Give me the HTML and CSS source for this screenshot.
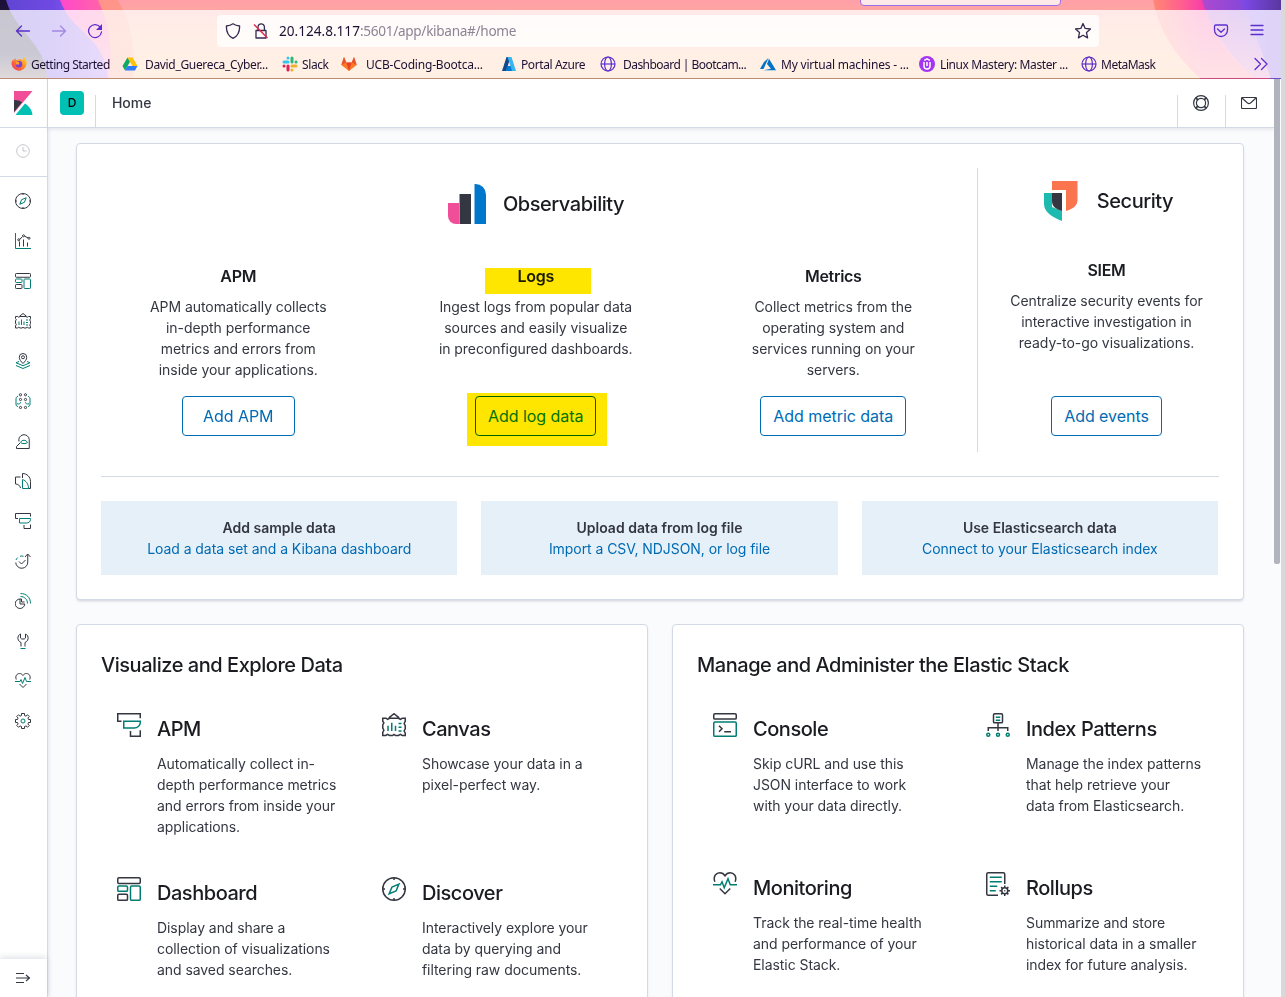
FILE: index.html
```html
<!DOCTYPE html>
<html lang="en">
<head>
<meta charset="utf-8">
<title>Home - Kibana</title>
<link rel="stylesheet" href="styles.css">
</head>
<body>
<svg class="defs" aria-hidden="true">
  <symbol id="discover" viewBox="0 0 32 32"><circle class="k" cx="16" cy="16" r="15"/><path class="k" d="M16 1v3M16 28v3M1 16h3M28 16h3"/><path class="t" d="M22.500 9.500l-3.800 9.200-9.200 3.800 3.800-9.200z"/></symbol>
  <symbol id="visualize" viewBox="0 0 32 32"><path class="t" d="M1 0v31h31"/><path class="k" d="M9 17v10M17 13v14M25 19v8M9 12.500l6-5M19 6.500l7 3"/><circle class="k" cx="7.500" cy="13.500" r="2"/><circle class="k" cx="17" cy="5.500" r="2"/><circle class="k" cx="28" cy="10.500" r="2"/></symbol>
  <symbol id="dashboard" viewBox="0 0 32 32"><rect class="k" x="1" y="1" width="30" height="7.500" rx="1.500"/><rect class="t" x="1" y="12" width="13" height="7" rx="1.500"/><rect class="k" x="1" y="23" width="13" height="8" rx="1.500"/><rect class="t" x="18" y="12" width="13" height="19" rx="1.500"/></symbol>
  <symbol id="canvas" viewBox="0 0 32 32"><path class="k" d="M9 6.500L16 1l7 5.500M1 7h4.500l2 1.500 2.500-1.500h12l2.500 1.500L27 7h4v4l-1.500 3 1.500 3v4l-1.500 3 1.500 3v3h-4l-2.500-1.500L22 30h-4l-2-1.500L14 30h-4l-2.500-1.500L5 30H1v-4l1.500-3L1 20v-4l1.500-3L1 11z"/><path class="t" d="M8 17v7M13 13v11M18 17v7M22 14h4M22 19h4M22 24h4"/></symbol>
  <symbol id="maps" viewBox="0 0 32 32"><path class="k" d="M16 21c-4-4-7.500-8-7.500-12.500a7.500 7.500 0 0115 0C23.500 13 20 17 16 21z"/><circle class="k" cx="16" cy="8.500" r="3"/><path class="t" d="M8 17l-6 2.500 14 6 14-6-6-2.500M2 25l14 6 14-6"/></symbol>
  <symbol id="ml" viewBox="0 0 32 32"><circle class="k" cx="11" cy="3.500" r="2.200"/><circle class="k" cx="21" cy="3.500" r="2.200"/><circle class="k" cx="11" cy="13" r="2.200"/><circle class="k" cx="21" cy="13" r="2.200"/><circle class="k" cx="11" cy="29" r="2.200"/><circle class="k" cx="21" cy="29" r="2.200"/><path class="t" d="M6 6.500c-3 1-4 3-4 5.500v10c0 3 1 4.500 4 5M26 6.500c3 1 4 3 4 5.500v10c0 3-1 4.500-4 5M4 21.500c4 1 7 0 7-3M28 21.500c-4 1-7 0-7-3"/></symbol>
  <symbol id="metrics" viewBox="0 0 32 32"><path class="k" d="M8 17a10.500 10.500 0 1120.500-4V31H3v-4l7-7"/><path class="t" d="M11 19c3-6 11-6 14 0-3 3-11 3-14 0z"/></symbol>
  <symbol id="logs" viewBox="0 0 32 32"><path class="k" d="M11 8H1v14c5 0 9 3 10 8M15 1c9 0 16 7 16 16v14h-4M15 1v9"/><path class="t" d="M15 13v18h12c0-9-5-16-12-18z"/></symbol>
  <symbol id="apm" viewBox="0 0 32 32"><path class="k" d="M6 11H1V1h30v6M18 24v7h13v-8"/><path class="t" d="M9 11h22v2c0 4-4 7-8 7H9z"/></symbol>
  <symbol id="uptime" viewBox="0 0 32 32"><path class="k" d="M1.500 19a12 12 0 0024-1V2M20 8l5.500-6L31 8M8 17l5 5 8-8"/><path class="t" d="M2 14c.8-2 1.800-3.500 3.500-5M10 6.500a12 12 0 017 0"/></symbol>
  <symbol id="siem" viewBox="0 0 32 32"><path class="k" d="M10 12a9.500 9.500 0 109.500 10H10zM10 12h3v6h6"/><path class="t" d="M11 1c12 0 20 8 20 20M11 7c8 0 14 6 14 14"/></symbol>
  <symbol id="devtools" viewBox="0 0 32 32"><path class="k" d="M12 27V19C7 17 5 12 6 8c.7-3 2.500-5 5-6v8l2.500 2h5L21 10V2c2.500 1 4.500 3 5 6 1 4-1 9-6 11v8"/><path class="t" d="M11 31h10"/></symbol>
  <symbol id="monitoring" viewBox="0 0 32 32"><path class="k" d="M2.500 13C-.5 5 5 1 9 1c3 0 5.500 1.500 7 4 1.500-2.500 4-4 7-4 4 0 9.500 4 6.500 12M9 22l7 7 7-7"/><path class="t" d="M0 17h10l2-4 3 8 5-12 3 8h9"/></symbol>
  <symbol id="gear" viewBox="0 0 32 32"><path class="k" d="M13 1h6v4l3 1.300L25 3.500 28.500 7l-2.700 3L27 13h4v6h-4l-1.200 3 2.700 3-3.500 3.500-3-2.700L19 27v4h-6v-4l-3-1.200-3 2.700L3.500 25l2.700-3L5 19H1v-6h4l1.200-3-2.700-3L7 3.500l3 2.800L13 5z"/><circle class="t" cx="16" cy="16" r="4"/></symbol>
  <symbol id="console" viewBox="0 0 32 32"><rect class="k" x="1" y="1" width="30" height="7" rx="1.500"/><rect class="t" x="1" y="12" width="30" height="19" rx="1.500"/><path class="k" d="M8 17l4 4-4 4M15 25h9"/></symbol>
  <symbol id="index" viewBox="0 0 32 32"><rect class="k" x="10" y="1" width="12" height="12" rx="1.500"/><path class="k" d="M16 13v11M3 24v-4.500h26V24"/><path class="t" d="M13 5.500h6M13 9.500h6"/><circle class="t" cx="3" cy="29" r="2"/><circle class="t" cx="16" cy="29" r="2"/><circle class="t" cx="29" cy="29" r="2"/></symbol>
  <symbol id="rollup" viewBox="0 0 32 32"><path class="k" d="M16 31H3a2 2 0 01-2-2V3a2 2 0 012-2h20a2 2 0 012 2v13"/><path class="t" d="M5 7h16M5 13h16M5 19h10M5 25h8"/><circle class="k" cx="25" cy="25" r="4"/><circle class="f" cx="25" cy="25" r="1"/><path class="k" d="M25 21v-3M25 32v-3M21 25h-3M32 25h-3M22.200 22.200l-2-2M27.800 22.200l2-2M22.200 27.800l-2 2M27.800 27.800l2 2"/></symbol>
  <symbol id="globe" viewBox="0 0 16 16"><g fill="none" stroke="#5b2fcb" stroke-width="1.200"><circle cx="8" cy="8" r="7"/><ellipse cx="8" cy="8" rx="3.400" ry="7"/><path d="M1 8h14"/></g></symbol>
</svg>

<div class="window">
  <header class="chrome">
    <svg class="theme" viewBox="0 0 1281 79" preserveAspectRatio="none">
      <defs>
        <linearGradient id="base" x2="0" y2="1"><stop stop-color="#ff9fa8"/><stop offset=".5" stop-color="#ffb795"/><stop offset="1" stop-color="#ffc08f"/></linearGradient>
        <linearGradient id="dark" x2="0" y2="1"><stop stop-color="#1d1038"/><stop offset=".7" stop-color="#26204a"/><stop offset="1" stop-color="#806468"/></linearGradient>
        <linearGradient id="vio"><stop stop-color="#5f45d0"/><stop offset=".5" stop-color="#7049e4"/><stop offset="1" stop-color="#a56af0"/></linearGradient>
        <linearGradient id="mag"><stop stop-color="#b043da"/><stop offset=".5" stop-color="#ff45d0"/><stop offset="1" stop-color="#ff69a0"/></linearGradient>
        <linearGradient id="org"><stop stop-color="#ff7d7b"/><stop offset="1" stop-color="#ff9480"/></linearGradient>
        <linearGradient id="rmag" gradientUnits="userSpaceOnUse" x1="1153" x2="1204"><stop stop-color="#ff8873"/><stop offset=".6" stop-color="#ff5c91"/><stop offset="1" stop-color="#f83cab"/></linearGradient>
        <linearGradient id="rvio" gradientUnits="userSpaceOnUse" x1="1202" x2="1260"><stop stop-color="#ae49d0"/><stop offset="1" stop-color="#7547dc"/></linearGradient>
        <linearGradient id="rend" gradientUnits="userSpaceOnUse" x1="1240" x2="1281"><stop stop-color="#814bed"/><stop offset="1" stop-color="#59379f"/></linearGradient>
        <linearGradient id="fade" gradientUnits="userSpaceOnUse" x1="0" x2="0" y1="10" y2="79"><stop stop-color="#ffa08c" stop-opacity=".1"/><stop offset="1" stop-color="#ffa08c" stop-opacity=".75"/></linearGradient>
        <linearGradient id="fadev" gradientUnits="userSpaceOnUse" x1="0" x2="0" y1="10" y2="79"><stop stop-color="#ff88c0" stop-opacity=".1"/><stop offset="1" stop-color="#ff90b8" stop-opacity=".8"/></linearGradient>
      </defs>
      <rect width="1281" height="79" fill="url(#base)"/>
      <path d="M0 0h118q20 36 15 79H0z" fill="url(#org)" opacity=".75"/>
      <path d="M0 0h98q17 36 11 79H0z" fill="url(#mag)"/>
      <path d="M0 10h102q12 36 7 69H0z" fill="url(#fadev)"/>
      <path d="M0 0h60c12 34 46 36 48 79H0z" fill="url(#vio)"/>
      <path d="M0 0h6c10 34 40 42 41 79H0z" fill="url(#dark)"/>
      <path d="M1153 0h128v79h-80q-40-36-48-79z" fill="url(#rmag)"/>
      <path d="M1156 10h125v69h-80q-36-33-45-69z" fill="url(#fade)"/>
      <path d="M1202 0h79v79h-25q-42-36-54-79z" fill="url(#rvio)"/>
      <path d="M1205 10h76v69h-25q-40-33-51-69z" fill="url(#fadev)"/>
      <path d="M1240 0h41v79h-10q-14-46-31-79z" fill="url(#rend)"/>
      <path d="M1245 10h36v69h-10q-12-40-26-69z" fill="#8858ff" opacity=".6"/>
      <rect y="10" width="1281" height="69" fill="#fff" opacity=".76"/>
      <path d="M0 78.500h1200" stroke="#bb8c78"/><path d="M1200 78.500h70" stroke="#cb4980"/><path d="M1270 78.500h11" stroke="#704cc8"/>
    </svg>
    <div class="tab-edge"></div>
    <div class="toolbar">
      <div class="navs">
        <svg width="16" height="16" viewBox="0 0 16 16"><path class="p" d="M14.500 8H1.500M6.500 3l-5 5 5 5"/></svg>
        <svg class="dim" width="16" height="16" viewBox="0 0 16 16"><path class="p" d="M1.500 8h13M9.500 3l5 5-5 5"/></svg>
        <svg width="16" height="16" viewBox="0 0 16 16"><path class="p" d="M13.500 4.500A6.500 6.500 0 1014.500 9"/><path d="M15 1v6H9z" fill="#5b2fcb"/></svg>
      </div>
      <div class="urlbar">
        <svg width="16" height="16" viewBox="0 0 16 16"><path class="u" d="M8 .8c2 1.400 4 2 6.600 2.200C14.800 9 13 13 8 15.400 3 13 1.200 9 1.400 3 4 2.800 6 2.200 8 .8z"/></svg>
        <svg class="lock" width="16" height="16" viewBox="0 0 16 16"><path class="u" d="M5 7V4a3.200 3.200 0 016.400 0v3M3 7.500h10V15H3z"/><path d="M1 1.500l13.500 13.500" stroke="#e22850" stroke-width="1.500"/></svg>
        <span class="url">20.124.8.117<span>:5601/app/kibana#/home</span></span>
        <svg class="star" width="18" height="18" viewBox="0 0 18 18"><path class="u" d="M9 1.500l2.200 4.900 5.300.6-4 3.600 1.100 5.300L9 13.200l-4.600 2.700 1.100-5.300-4-3.600 5.300-.6z"/></svg>
      </div>
      <div class="tools">
        <svg width="16" height="16" viewBox="0 0 16 16"><path class="p" d="M3 2h10a1.500 1.500 0 011.500 1.500V7a6.500 6.500 0 01-13 0V3.500A1.500 1.500 0 013 2zM4.500 6L8 9.200 11.500 6"/></svg>
        <svg width="14" height="14" viewBox="0 0 14 14"><path class="p" d="M1 1.500h12M1 6h12M1 10.500h12"/></svg>
      </div>
    </div>
    <nav class="bookmarks">
      <a><svg viewBox="0 0 16 16"><defs><linearGradient id="fx" x1="1" x2="0" y2="1"><stop stop-color="#ffe13a"/><stop offset=".45" stop-color="#ff8a20"/><stop offset="1" stop-color="#f12868"/></linearGradient></defs><path d="M12.500.5c1 1 2 2 2.700 4A7.600 7.600 0 11.500 8c0-2 .7-4 2-5v2l2-3c0 1 .5 2 1.500 2.300 1.500-.8 4-2 6.500.2-.3-1.500-1-2.500 0-4z" fill="url(#fx)"/><circle cx="8" cy="8.300" r="3.200" fill="#7a3fd8"/><path d="M5 5.500c3-.5 4 1 3 3H5z" fill="#ff9d2a"/></svg><span class="tight">Getting Started</span></a>
      <a class="g7"><svg viewBox="0 0 16 16"><path d="M5.500 1.500L.5 10 3 14.500l5-8.700z" fill="#0da960"/><path d="M5.500 1.500h5l5 8.500h-5z" fill="#ffc107"/><path d="M5.500 10h10L13 14.500H3z" fill="#2c7cf6"/></svg><span class="open">David_Guereca_Cyber...</span></a>
      <a><svg viewBox="0 0 16 16" fill="none" stroke-width="3" stroke-linecap="round"><path d="M2 6h4M6 2v.1" stroke="#36c5f0"/><path d="M10 2v4M14 6h.1" stroke="#2eb67d"/><path d="M10 10h4M10 14v.1" stroke="#ecb22e"/><path d="M6 10v4M2 10h.1" stroke="#e01e5a"/></svg><span>Slack</span></a>
      <a class="g9"><svg viewBox="0 0 16 16"><path d="M3 1L.3 9 8 15 15.700 9 13 1l-2.300 5.500H5.300z" fill="#fc7a26"/><path d="M5.300 6.500L8 15l2.700-8.500z" fill="#e24329"/><path d="M3 1L.3 9l5-2.500zM13 1l2.700 8-5-2.500z" fill="#e8532b"/></svg><span class="wide">UCB-Coding-Bootca...</span></a>
      <a><svg viewBox="0 0 16 16"><path d="M5.500 1h4L5.200 15H1z" fill="#114a8b"/><path d="M6 10h5l1 5H5z" fill="#0078d4"/><path d="M6.500 1h4L15 15h-4z" fill="#38b4ee"/></svg><span>Portal Azure</span></a>
      <a class="g7"><svg><use href="#globe"/></svg><span class="tighter">Dashboard | Bootcam...</span></a>
      <a class="g5"><svg viewBox="0 0 16 16"><path d="M8.500 2L4 6 0 13h3.500z" fill="#0072c6"/><path d="M9 2.700l-2 5.300 4 4.800-7.500 1.400H16z" fill="#0072c6"/></svg><span class="wide">My virtual machines - ...</span></a>
      <a class="g5"><svg viewBox="0 0 16 16"><circle cx="8" cy="8" r="8" fill="#a435f0"/><path d="M5 6v4a3 3 0 006 0V6M5.200 4.300L8 2.800l2.800 1.500M8 6v4" fill="none" stroke="#fff" stroke-width="1.500"/></svg><span>Linux Mastery: Master ...</span></a>
      <a><svg><use href="#globe"/></svg><span class="tight">MetaMask</span></a>
      <svg class="more" viewBox="0 0 16 16"><path class="p" d="M2 2.500L7.500 8 2 13.500M8.500 2.500L14 8l-5.500 5.500"/></svg>
    </nav>
  </header>

  <div class="app">
    <aside class="side">
      <div class="logo"><svg width="19" height="24" viewBox="0 0 19 24"><path d="M0 0h18.500L0 22z" fill="#f04e98"/><path d="M0 9c3 0 6 .8 8 2.200L0 21z" fill="#343741"/><path d="M11 12.500c4 2.500 7 6.500 7.500 11.500H1.500z" fill="#00bfb3"/></svg></div>
      <div class="recent"><svg width="14" height="14" viewBox="0 0 14 14"><path d="M7 3v4h3.500" fill="none" stroke="#c4c5c8"/><circle cx="7" cy="7" r="6.300" fill="none" stroke="#c4c5c8"/></svg></div>
      <div class="apps">
        <i><svg><use href="#discover"/></svg></i><i><svg><use href="#visualize"/></svg></i><i><svg><use href="#dashboard"/></svg></i><i><svg><use href="#canvas"/></svg></i><i><svg><use href="#maps"/></svg></i><i><svg><use href="#ml"/></svg></i><i><svg><use href="#metrics"/></svg></i><i><svg><use href="#logs"/></svg></i><i><svg><use href="#apm"/></svg></i><i><svg><use href="#uptime"/></svg></i><i><svg><use href="#siem"/></svg></i><i><svg><use href="#devtools"/></svg></i><i><svg><use href="#monitoring"/></svg></i><i><svg><use href="#gear"/></svg></i>
      </div>
      <div class="expand"><svg width="16" height="12" viewBox="0 0 16 12"><path d="M1 1.500h8M1 6h13.500M1 10.500h8M11 3l3.500 3-3.500 3" fill="none" stroke="#343741" stroke-width="1.100"/></svg></div>
    </aside>
    <div class="body">
      <div class="topbar">
        <div class="space"><b>D</b></div>
        <div class="crumb">Home</div>
        <div class="action"><svg width="16" height="16" viewBox="0 0 16 16" fill="none" stroke="#343741"><circle cx="8" cy="8" r="7.400" stroke-width="1.200"/><circle cx="8" cy="8" r="4.600" stroke-width="1.200"/><path stroke-width="1.800" d="M2.900 2.900l1.900 1.900M13.100 2.900l-1.900 1.900M2.900 13.100l1.900-1.900M13.100 13.100l-1.900-1.900"/></svg></div>
        <div class="action"><svg width="16" height="12" viewBox="0 0 16 12" fill="none" stroke="#343741" stroke-width="1.100"><rect x=".5" y=".5" width="15" height="11" rx="1"/><path d="M1 1l5.500 5q1.500 1.200 3 0L15 1"/></svg></div>
      </div>
      <main>
        <section class="card add">
          <div class="solutions">
            <div class="obs">
              <h2><svg width="38" height="40" viewBox="0 0 38 40"><path d="M0 19h11v21H8a8 8 0 01-8-8z" fill="#f04e98"/><path d="M11.500 10H23v30H11.500z" fill="#343741"/><path d="M26.500 0h1A10.500 10.500 0 0138 10.500V40H26.500z" fill="#0077cc"/></svg>Observability</h2>
              <div class="cols">
                <article><h3>APM</h3><p>APM automatically collects<br>in-depth performance<br>metrics and errors from<br>inside your applications.</p><button>Add APM</button></article>
                <article><h3>Logs<mark class="m1"></mark></h3><p>Ingest logs from popular data<br>sources and easily visualize<br>in preconfigured dashboards.</p><button class="log">Add log data<mark class="m2"></mark></button></article>
                <article><h3>Metrics</h3><p>Collect metrics from the<br>operating system and<br>services running on your<br>servers.</p><button>Add metric data</button></article>
              </div>
            </div>
            <div class="sec">
              <h2><svg width="34" height="40" viewBox="0 0 34 40"><path d="M8 0h25.500v19c0 6-5 9-11.500 11V9H8z" fill="#fa744e"/><path d="M0 12h8v14l10 4v10C8 36 0 31 0 23z" fill="#1dbab0"/><path d="M8 12h10v18C12 28 8 26 8 20z" fill="#343741"/></svg>Security</h2>
              <article><h3>SIEM</h3><p>Centralize security events for<br>interactive investigation in<br>ready-to-go visualizations.</p><button>Add events</button></article>
            </div>
          </div>
          <div class="data">
            <div><b>Add sample data</b><a>Load a data set and a Kibana dashboard</a></div>
            <div><b>Upload data from log file</b><a>Import a CSV, NDJSON, or log file</a></div>
            <div><b>Use Elasticsearch data</b><a>Connect to your Elasticsearch index</a></div>
          </div>
        </section>
        <div class="pair">
          <section class="card feat">
            <h2>Visualize and Explore Data</h2>
            <div class="grid left">
              <div class="item"><svg><use href="#apm"/></svg><div><h4>APM</h4><p>Automatically collect in-<br>depth performance metrics<br>and errors from inside your<br>applications.</p></div></div>
              <div class="item"><svg><use href="#canvas"/></svg><div><h4>Canvas</h4><p>Showcase your data in a<br>pixel-perfect way.</p></div></div>
              <div class="item"><svg><use href="#dashboard"/></svg><div><h4>Dashboard</h4><p>Display and share a<br>collection of visualizations<br>and saved searches.</p></div></div>
              <div class="item"><svg><use href="#discover"/></svg><div><h4>Discover</h4><p>Interactively explore your<br>data by querying and<br>filtering raw documents.</p></div></div>
            </div>
          </section>
          <section class="card feat">
            <h2>Manage and Administer the Elastic Stack</h2>
            <div class="grid right">
              <div class="item"><svg><use href="#console"/></svg><div><h4>Console</h4><p>Skip cURL and use this<br>JSON interface to work<br>with your data directly.</p></div></div>
              <div class="item"><svg><use href="#index"/></svg><div><h4>Index Patterns</h4><p>Manage the index patterns<br>that help retrieve your<br>data from Elasticsearch.</p></div></div>
              <div class="item"><svg><use href="#monitoring"/></svg><div><h4>Monitoring</h4><p>Track the real-time health<br>and performance of your<br>Elastic Stack.</p></div></div>
              <div class="item"><svg><use href="#rollup"/></svg><div><h4>Rollups</h4><p>Summarize and store<br>historical data in a smaller<br>index for future analysis.</p></div></div>
            </div>
          </section>
        </div>
      </main>
    </div>
    <div class="scroll"><div class="thumb"></div></div>
  </div>
</div>
</body>
</html>
```
FILE: styles.css
```css
* { box-sizing: border-box; margin: 0; padding: 0; }
body {
  width: 1285px; height: 997px; overflow: hidden; background: #d9d8da;
  font-family: Inter, "Liberation Sans", sans-serif;
  font-size: 14px; line-height: 21px; letter-spacing: -0.06px; color: #343741;
}
svg { flex: none; }
.defs { display: none; }
.k, .t { fill: none; stroke: #343741; stroke-width: 2; }
.t { stroke: #017d73; }
.f { fill: #343741; }
.p { fill: none; stroke: #5b2fcb; stroke-width: 1.3; stroke-linecap: round; stroke-linejoin: round; }
.u { fill: none; stroke: #352a50; stroke-width: 1.3; stroke-linejoin: round; }
.window { width: 1281px; height: 997px; display: flex; flex-direction: column; }

.chrome { position: relative; height: 79px; flex: none; padding-top: 10px; font-family: "Noto Sans", sans-serif; color: #1d1133; }
.theme { position: absolute; inset: 0; width: 1281px; height: 79px; }
.tab-edge { position: absolute; left: 860px; top: -6px; width: 201px; height: 12px; border: 1px solid #9b6de8; border-radius: 4px; background: #ffe8e8; }
.toolbar { position: relative; height: 41px; display: flex; align-items: center; padding-left: 15px; }
.navs { display: flex; gap: 20px; width: 202px; }
.dim { opacity: .45; }
.urlbar { width: 882px; height: 32px; border-radius: 4px; background: rgba(255,255,255,.8); display: flex; align-items: center; padding: 0 7px 0 8px; }
.lock { margin-left: 12px; }
.url { margin-left: 10px; flex: 1; font-size: 13.6px; letter-spacing: 0; }
.url span { color: #8d8495; letter-spacing: -.3px; }
.tools { display: flex; align-items: center; gap: 21px; margin-left: 114px; }
.bookmarks { position: relative; display: grid; grid-template-columns: 111px 160px 59px 160px 99px 160px 159px 162px 172px 16px; padding-left: 11px; height: 26px; align-items: center; font-size: 12px; letter-spacing: -.4px; white-space: nowrap; }
.bookmarks a { display: flex; align-items: center; gap: 4px; }
.bookmarks .g5 { gap: 5px; }
.bookmarks .g7 { gap: 7px; }
.bookmarks .g9 { gap: 9px; }
.bookmarks svg { width: 16px; height: 16px; }
.bookmarks .tight { letter-spacing: -.5px; }
.bookmarks .tighter { letter-spacing: -.54px; }
.bookmarks .open { letter-spacing: -.33px; }
.bookmarks .wide { letter-spacing: -.2px; }

.app { height: 918px; display: flex; background: #fafbfd; }
.side { width: 48px; flex: none; background: #fff; border-right: 1px solid #d3dae6; box-shadow: 1px 0 3px rgba(100,110,140,.15); display: flex; flex-direction: column; align-items: flex-start; }
.logo, .recent { width: 47px; height: 49px; flex: none; border-bottom: 1px solid #d3dae6; display: flex; align-items: center; justify-content: center; }
.logo { padding-bottom: 1px; }
.recent { padding: 0 2px 2px 0; }
.apps { padding-top: 4px; flex: 1; }
.apps i { display: flex; height: 40px; width: 46px; align-items: center; justify-content: center; }
.apps svg { width: 16px; height: 16px; }
.expand { width: 47px; height: 38px; padding-right: 1px; display: flex; align-items: center; justify-content: center; box-shadow: 0 -2px 6px rgba(100,110,140,.2); }
.body { width: 1226px; display: flex; flex-direction: column; }
.topbar { height: 49px; flex: none; padding-right: 1px; background: #fff; border-bottom: 1px solid #d3dae6; box-shadow: 0 2px 3px rgba(100,110,140,.12); display: flex; align-items: flex-end; }
.space { width: 48px; height: 32px; border-right: 1px solid #d3dae6; padding-left: 12px; }
.space b { display: block; width: 24px; height: 24px; margin-top: -4px; border-radius: 4px; background: #00bfb3; color: #000; font-size: 12px; font-weight: 500; line-height: 24px; text-align: center; }
.crumb { flex: 1; height: 35px; padding-left: 16px; font-weight: 500; }
.action { width: 48px; height: 32px; border-left: 1px solid #d3dae6; display: flex; justify-content: center; align-items: center; padding: 0 1px 16px 0; }
main { padding: 15px 0 0 28px; }
.card { background: #fff; border: 1px solid #d3dae6; border-radius: 4px; box-shadow: 0 2px 3px -1px rgba(100,110,140,.3); }
.add { width: 1168px; height: 457px; padding: 24px; }
h2, h4 { font-size: 20px; font-weight: 500; line-height: 24px; letter-spacing: -.46px; color: #1a1c21; }
h3 { font-size: 16px; font-weight: 600; line-height: 24px; letter-spacing: -.3px; color: #1a1c21; margin-bottom: 8px; }
.solutions { display: grid; grid-template-columns: 876px 242px; height: 284px; }
.obs { padding-top: 16px; }
.sec { border-left: 1px solid #d3dae6; padding: 13px 0 0 16px; }
.solutions h2 { display: flex; align-items: center; justify-content: center; gap: 17px; height: 40px; }
.obs h2 { margin-left: -6px; }
.sec h2 { gap: 19px; padding-left: 4px; }
.cols { display: grid; grid-template-columns: repeat(3, 297.5px); margin-left: -11.5px; padding-top: 40px; }
.sec article { padding-top: 37px; height: 215px; }
article { text-align: center; height: 172px; display: flex; flex-direction: column; align-items: center; }
article h3, article button { position: relative; }
article p { flex: 1; }
button { height: 40px; padding: 0 20px; border: 1px solid #006bb4; border-radius: 4px; background: #fff; color: #006bb4; font: 400 16px/24px Inter, sans-serif; letter-spacing: -.05px; }
article:nth-child(n+2) button, .sec button { padding: 0 12px; }
article:nth-child(n+2) .log { color: #0080b4; }
mark { position: absolute; background: #ffe600; mix-blend-mode: multiply; }
.m1 { left: -33px; top: 4px; width: 106px; height: 26px; }
.m2 { left: -9px; top: -4px; width: 140px; height: 53px; }
.data { margin-top: 24px; padding: 24px 1px 0 0; border-top: 1px solid #d3dae6; display: grid; grid-template-columns: repeat(3, 1fr); gap: 24px; }
.data div { height: 74px; background: #e6f0f8; display: flex; flex-direction: column; align-items: center; justify-content: center; }
.data b { font-weight: 600; letter-spacing: 0; color: #343741; }
.data a { color: #006bb4; }
.pair { display: flex; gap: 24px; margin-top: 24px; }
.feat { width: 572px; height: 400px; padding: 28px 24px; }
.grid { display: grid; padding: 36px 0 0 16px; }
.grid.left { grid-template-columns: 265px 1fr; grid-auto-rows: 164px; }
.grid.right { grid-template-columns: 273px 1fr; grid-auto-rows: 159px; }
.item { display: flex; gap: 16px; }
.item svg { width: 24px; height: 24px; }
.item h4 { margin: 4px 0 12px; }
.scroll { width: 7px; background: #fafbfd; }
.thumb { width: 6px; height: 485px; background: #b1b4bd; border-radius: 0 0 2px 2px; }
```
